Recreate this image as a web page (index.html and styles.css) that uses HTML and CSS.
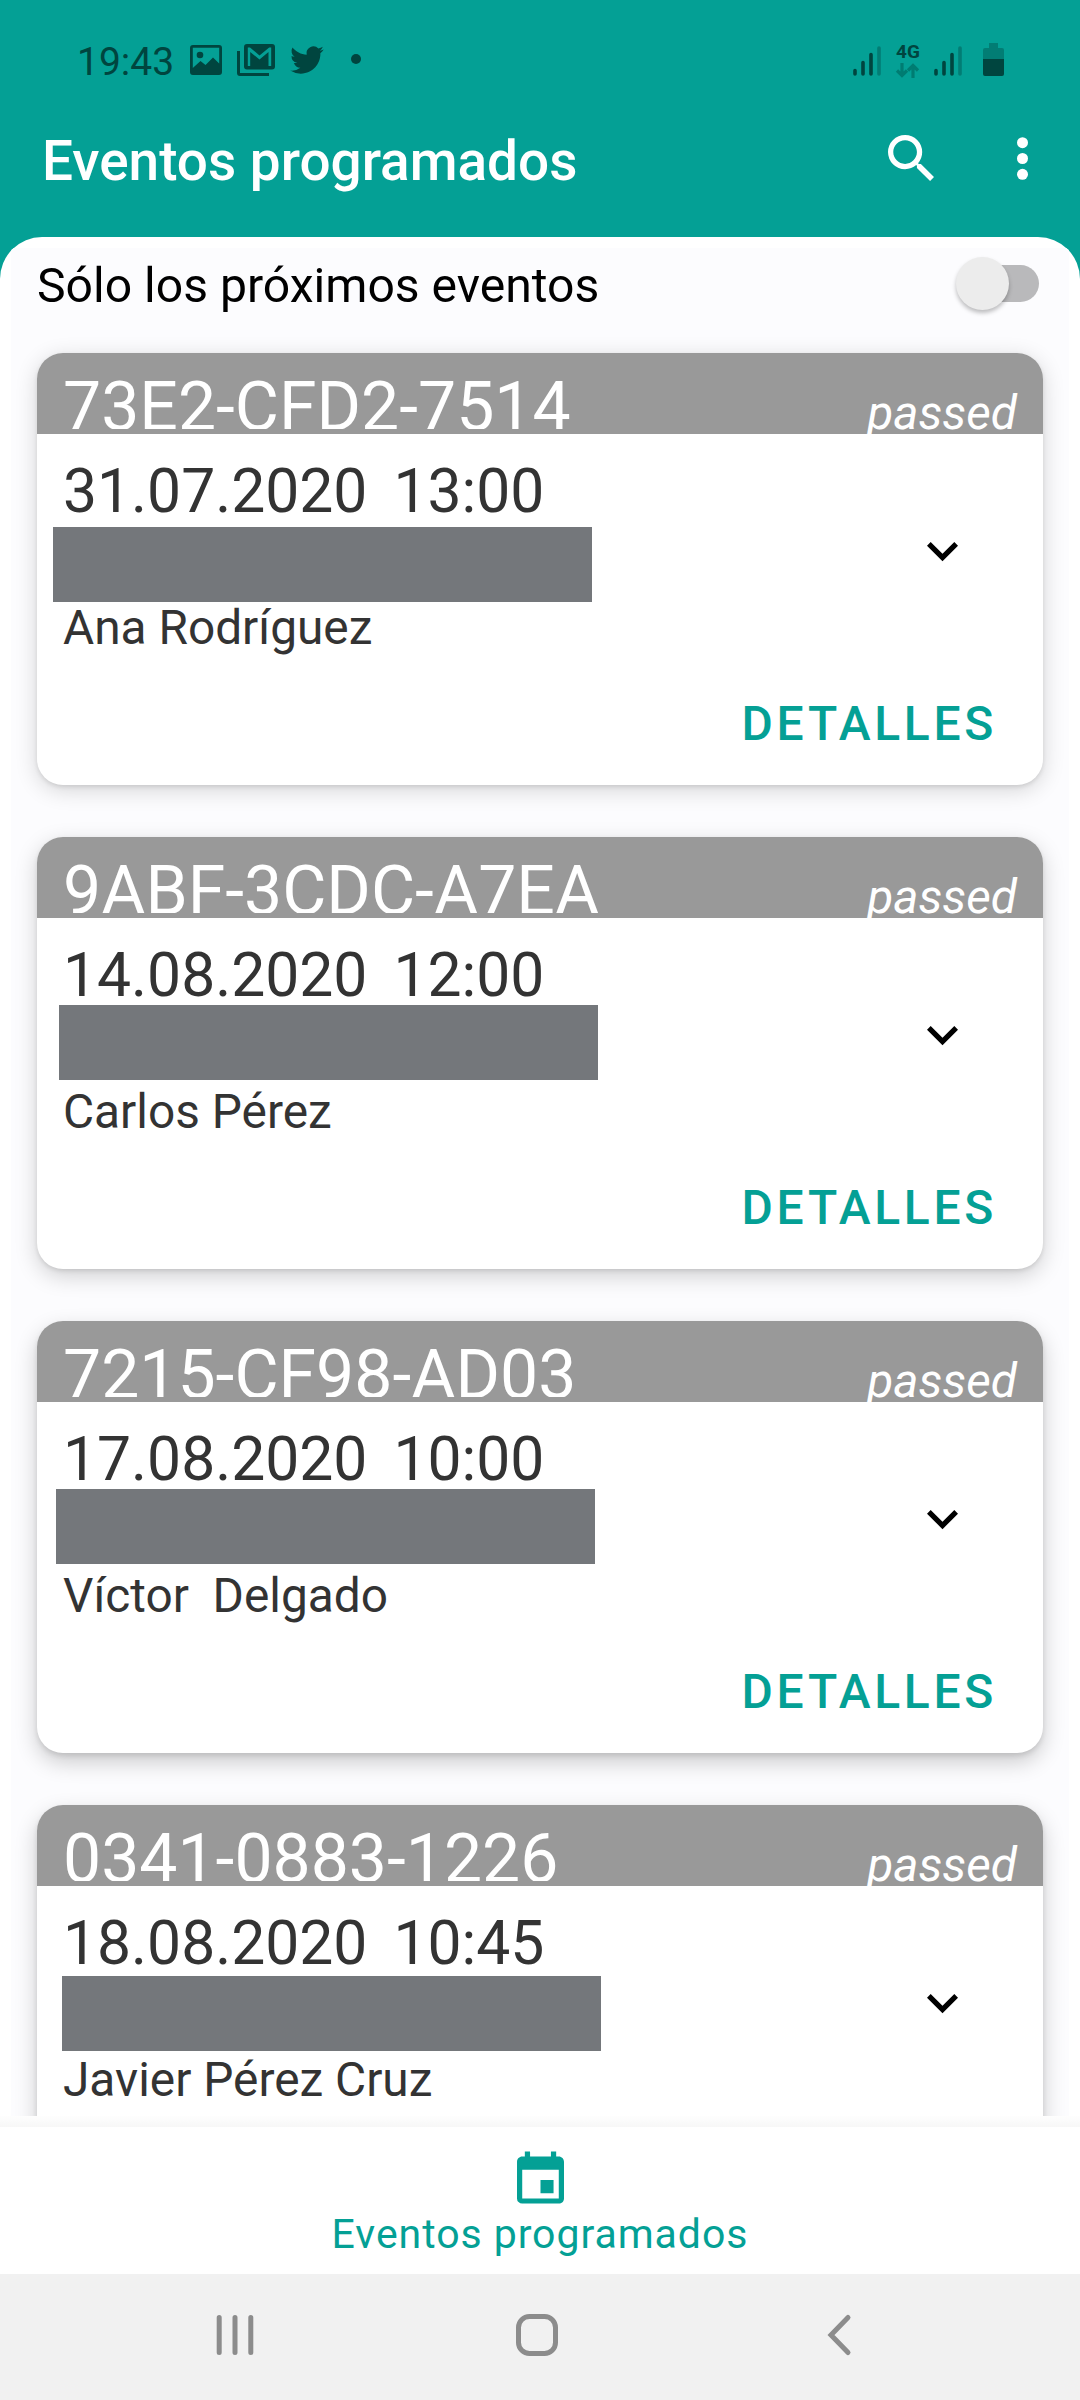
FILE: index.html
```html
<!DOCTYPE html>
<html lang="es">
<head>
<meta charset="utf-8">
<title>Eventos programados</title>
<link rel="stylesheet" href="styles.css">
</head>
<body>
<svg width="0" height="0" class="defs">
  <symbol id="chevron" viewBox="0 0 31 20"><path d="M0 3.700 3.700 0 15.500 11.800 27.300 0 31 3.700 15.500 19.200z"/></symbol>
  <symbol id="signal" viewBox="0 0 28 30"><path d="M2 24.500v3.500M10 16.500v11.500M18 8.500v19.500"/><path class="faint" d="M26 2v26"/></symbol>
</svg>
<div class="screen">
  <header class="top">
    <div class="status">
      <span class="clock">19:43</span>
      <svg class="ico-image" width="32" height="30" viewBox="0 0 32 30"><path fill-rule="evenodd" d="M3 0h26a3 3 0 0 1 3 3v24a3 3 0 0 1-3 3H3a3 3 0 0 1-3-3V3a3 3 0 0 1 3-3zM2.800 2.800V23L10.500 16 15.500 20 23 12.500 29.200 18.500V2.800z"/><circle cx="10" cy="10" r="3.300"/></svg>
      <svg class="ico-mail" width="38" height="32" viewBox="0 0 38 32"><path d="M0 7h3v22h29v3H3a3 3 0 0 1-3-3z"/><path fill-rule="evenodd" d="M10 0h25a3 3 0 0 1 3 3v19.500a3 3 0 0 1-3 3H10a3 3 0 0 1-3-3V3a3 3 0 0 1 3-3zM10.800 3.500V22h2.400V8l9.300 7.500L31.500 8v14h2.700V3.500h-2L22.500 11.500 13 3.500z"/></svg>
      <svg class="ico-bird" width="34" height="28" viewBox="0 2 24 20"><path d="M23.950 4.570a10 10 0 0 1-2.820.770 4.960 4.960 0 0 0 2.160-2.720c-.950.550-2 .950-3.130 1.180a4.920 4.920 0 0 0-8.380 4.480C7.690 8.100 4.070 6.130 1.640 3.160a4.920 4.920 0 0 0 1.520 6.570 4.900 4.900 0 0 1-2.230-.610v.060a4.920 4.920 0 0 0 3.950 4.830 5 5 0 0 1-2.210.080 4.940 4.940 0 0 0 4.600 3.420A9.870 9.870 0 0 1 0 19.540a13.990 13.990 0 0 0 7.550 2.210c9.050 0 14-7.500 14-13.980 0-.210 0-.420-.020-.630a9.940 9.940 0 0 0 2.420-2.570z"/></svg>
      <span class="more-dot"></span>
      <svg class="ico-signal first" width="28" height="30"><use href="#signal"/></svg>
      <div class="net"><span>4G</span><svg width="23" height="15" viewBox="0 0 23 15"><path d="M6 0v12M1 7.500 6 12.500 11 7.500M17 15V2.500M12 7.500 17 2.500 22 7.500"/></svg></div>
      <svg class="ico-signal" width="28" height="30"><use href="#signal"/></svg>
      <svg class="ico-battery" width="21" height="33" viewBox="0 0 21 33"><path class="faint-fill" d="M6 0h9v5h4a2 2 0 0 1 2 2v9H0V7a2 2 0 0 1 2-2h4z"/><path d="M0 16h21v15a2 2 0 0 1-2 2H2a2 2 0 0 1-2-2z"/></svg>
    </div>
    <div class="appbar">
      <h1>Eventos programados</h1>
      <svg class="ico-search" width="46" height="46" viewBox="3 3 17.490 17.490"><path d="M15.500 14h-.790l-.280-.270A6.471 6.471 0 0 0 16 9.500 6.500 6.500 0 1 0 9.500 16c1.610 0 3.090-.590 4.230-1.570l.270.280v.790l5 4.990L20.490 19l-4.990-5zm-6 0C7.010 14 5 11.990 5 9.500S7.010 5 9.500 5 14 7.010 14 9.500 11.990 14 9.500 14z"/></svg>
      <svg class="ico-menu" width="11" height="43" viewBox="0 0 11 43"><circle cx="5.500" cy="5.700" r="5.500"/><circle cx="5.500" cy="21.500" r="5.500"/><circle cx="5.500" cy="37.300" r="5.500"/></svg>
    </div>
  </header>
  <main class="panel">
    <div class="list">
      <div class="filter"><span>Sólo los próximos eventos</span><span class="switch"><i></i></span></div>
      <article class="card lift1">
        <div class="head"><span class="code">73E2-CFD2-7514</span><em>passed</em></div>
        <div class="when">31.07.2020&nbsp; 13:00</div>
        <div class="bar bar1"></div>
        <div class="who">Ana Rodríguez</div>
        <svg class="chev" width="31" height="20"><use href="#chevron"/></svg>
        <div class="action">DETALLES</div>
      </article>
      <article class="card lift2">
        <div class="head"><span class="code">9ABF-3CDC-A7EA</span><em>passed</em></div>
        <div class="when">14.08.2020&nbsp; 12:00</div>
        <div class="bar bar2"></div>
        <div class="who">Carlos Pérez</div>
        <svg class="chev" width="31" height="20"><use href="#chevron"/></svg>
        <div class="action">DETALLES</div>
      </article>
      <article class="card lift3">
        <div class="head"><span class="code">7215-CF98-AD03</span><em>passed</em></div>
        <div class="when">17.08.2020&nbsp; 10:00</div>
        <div class="bar bar3"></div>
        <div class="who">Víctor&nbsp; Delgado</div>
        <svg class="chev" width="31" height="20"><use href="#chevron"/></svg>
        <div class="action">DETALLES</div>
      </article>
      <article class="card lift3">
        <div class="head"><span class="code">0341-0883-1226</span><em>passed</em></div>
        <div class="when">18.08.2020&nbsp; 10:45</div>
        <div class="bar bar4"></div>
        <div class="who">Javier Pérez Cruz</div>
        <svg class="chev" width="31" height="20"><use href="#chevron"/></svg>
      </article>
    </div>
  </main>
  <nav class="tabs">
    <svg width="47" height="53" viewBox="3 1 18 20"><path d="M17 12h-5v5h5v-5zM16 1v2H8V1H6v2H5c-1.110 0-1.990.900-1.990 2L3 19a2 2 0 0 0 2 2h14c1.100 0 2-.900 2-2V5c0-1.100-.900-2-2-2h-1V1h-2zm3 18H5V8h14v11z"/></svg>
    <span>Eventos programados</span>
  </nav>
  <footer class="sysnav">
    <svg width="38" height="42" viewBox="0 0 38 42"><path d="M3.200 3.500v35M19 3.500v35M34.800 3.500v35"/></svg>
    <svg class="home" width="42" height="42" viewBox="0 0 42 42"><rect x="2.500" y="2.500" width="37" height="37" rx="11"/></svg>
    <svg class="back" width="24" height="42" viewBox="0 0 24 42"><path d="M21 3.500 4 21 21 38.500"/></svg>
  </footer>
</div>
</body>
</html>
```
FILE: styles.css
```css
* { box-sizing: border-box; }
body {
  margin: 0;
  font-family: Roboto, "Liberation Sans", sans-serif;
  background: #04a095;
}
svg { display: block; flex: none; overflow: visible; }
.defs { position: absolute; }
.screen {
  width: 1080px;
  height: 2400px;
  display: flex;
  flex-direction: column;
  overflow: hidden;
}
.top { height: 237px; flex: none; }

.status {
  height: 104px;
  padding: 0 76px 0 77px;
  display: flex;
  align-items: flex-start;
  color: #00453f;
  fill: #00453f;
}
.clock { width: 113px; margin-top: 39px; font-size: 39px; line-height: 46px; }
.ico-image { margin-top: 45px; }
.ico-mail { margin: 44px 0 0 15px; }
.ico-bird { margin: 46px 0 0 15px; }
.more-dot { width: 10px; height: 10px; margin: 54px 0 0 27px; border-radius: 50%; background: #00453f; }
.ico-signal { margin-top: 46px; fill: none; stroke: #00453f; stroke-width: 3.6; stroke-linecap: round; }
.ico-signal.first { margin-left: auto; }
.faint { stroke: #00453f; opacity: .38; }
.faint-fill { opacity: .38; }
.net { width: 23px; margin: 43px 15px 0; }
.net span { display: block; font-size: 19px; line-height: 18px; font-weight: 700; white-space: nowrap; }
.net svg { margin-top: 2px; fill: none; stroke: #007c72; stroke-width: 3.2; }
.ico-battery { margin: 43px 0 0 21px; }

.appbar {
  height: 133px;
  padding: 0 52px 0 42px;
  display: flex;
  align-items: flex-start;
  color: #fff;
  fill: #fff;
}
h1 { margin: 25px auto 0 0; font-size: 54.9px; line-height: 64px; font-weight: 500; white-space: nowrap; }
.ico-search { margin-top: 31px; }
.ico-menu { margin: 33px 0 0 83px; }

.panel {
  height: 1879px;
  flex: none;
  padding: 11px 11px 0;
  background: #fff;
  border-radius: 42px 42px 0 0;
  overflow: hidden;
}
.list { height: 1868px; padding: 0 26px; background: #fcfcfe; }
.filter {
  height: 105px;
  padding: 10px 4px 0 0;
  display: flex;
  justify-content: space-between;
  font-size: 48.1px;
  line-height: 55px;
}
.filter > span:first-child { white-space: nowrap; }
.switch {
  width: 73px;
  height: 37px;
  margin-top: 7px;
  border-radius: 19px;
  background: #b9b9bb;
  display: flex;
  align-items: center;
}
.switch i {
  flex: none;
  width: 53px;
  height: 53px;
  margin-left: -10px;
  border-radius: 50%;
  background: #ececec;
  box-shadow: 0 3px 4px rgba(0, 0, 0, .25);
}

.card {
  position: relative;
  height: 432px;
  margin-bottom: 52px;
  border-radius: 26px;
  background: #fff;
  color: #333;
}
.lift1 { box-shadow: 0 5px 22px rgba(0, 0, 0, .16), 0 2px 4px rgba(0, 0, 0, .1); }
.lift2 { box-shadow: 0 7px 22px rgba(0, 0, 0, .18), 0 2px 4px rgba(0, 0, 0, .1); }
.lift3 { box-shadow: 0 9px 22px rgba(0, 0, 0, .2), 0 3px 5px rgba(0, 0, 0, .1); }
.head {
  height: 81px;
  padding: 0 26px;
  display: flex;
  justify-content: space-between;
  align-items: flex-start;
  border-radius: 26px 26px 0 0;
  background: #999;
  color: #fff;
  overflow: hidden;
}
.code { height: 76px; padding-top: 14px; font-size: 67.9px; line-height: 80px; white-space: nowrap; overflow: hidden; }
.head em { margin-top: 33px; font-size: 47.8px; line-height: 55px; }
.when { height: 72px; padding: 22px 26px 0; font-size: 60.6px; line-height: 72px; word-spacing: -2px; white-space: nowrap; }
.who { margin-top: 95px; padding-left: 26px; font-size: 47.8px; line-height: 55px; white-space: nowrap; }
/* Redaction bars lie over the card body */
.bar { position: absolute; width: 539px; height: 75px; background: #74777b; }
.bar1 { left: 16px; top: 174px; }
.bar2 { left: 22px; top: 168px; }
.bar3 { left: 19px; top: 168px; }
.bar4 { left: 25px; top: 171px; }
.chev { position: absolute; left: 890px; top: 189px; fill: #000; }
.action {
  margin-top: 40px;
  padding-right: 46px;
  text-align: right;
  color: #04a095;
  font-size: 48px;
  line-height: 55px;
  font-weight: 500;
  letter-spacing: 3.7px;
}

.tabs {
  height: 158px;
  flex: none;
  padding-top: 35px;
  display: flex;
  flex-direction: column;
  align-items: center;
  background: linear-gradient(#fefefe, #f7f7f7 11px, #fff 11px);
  color: #04a095;
  fill: #04a095;
}
.tabs span { margin-top: 6px; font-size: 41px; line-height: 48px; letter-spacing: .95px; white-space: nowrap; }

.sysnav {
  height: 126px;
  flex: none;
  padding: 40px 0 0 216px;
  display: flex;
  background: #f1f1f1;
  fill: none;
  stroke: #8c8c8c;
  stroke-width: 5;
  stroke-linecap: round;
}
.home { margin-left: 262px; }
.back { margin-left: 269px; }
```
